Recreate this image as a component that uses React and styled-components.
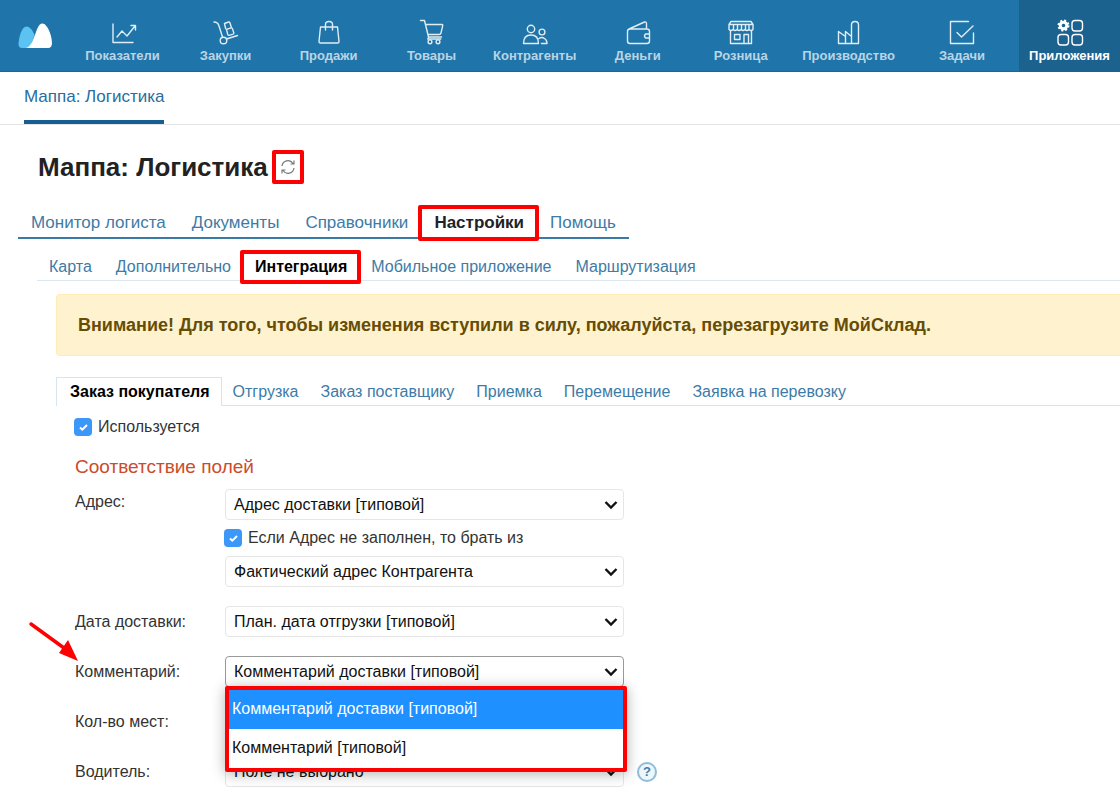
import React from "react";
import styled, { createGlobalStyle, css } from "styled-components";

const GlobalStyle = createGlobalStyle`
  *, *::before, *::after { box-sizing: border-box; }
  body {
    margin: 0;
    background: #fff;
    color: #333;
    font-family: "Liberation Sans", Arial, sans-serif;
    font-size: 16px;
    line-height: 20px;
  }
  a { text-decoration: none; color: inherit; }
`;

const Page = styled.div`
  overflow-x: hidden;
`;

const TopBar = styled.header`
  display: flex;
  height: 72px;
  background: #1f74aa;
  box-shadow: inset 0 -1px 0 #1b6796;
`;

const Logo = styled.a`
  flex: none;
  width: 71px;
  padding: 23px 0 0 18px;
`;

const Nav = styled.nav`
  display: flex;
  flex: 1;
`;

const NavItem = styled.a`
  display: flex;
  flex: ${(p) => (p.$grow ? 1 : 0)} 0 auto;
  flex-direction: column;
  align-items: center;
  gap: 1px;
  min-width: ${(p) => (p.$active ? 101 : 103)}px;
  padding: 18px ${(p) => (p.$active ? 8 : 10)}px 0;
  font-size: 13px;
  font-weight: bold;
  line-height: 18px;
  color: ${(p) => (p.$active ? "#fff" : "#b9d4e5")};
  background: ${(p) => (p.$active ? "#1b628f" : "transparent")};

  svg {
    width: 28px;
    height: 28px;
    fill: none;
    stroke: ${(p) => (p.$active ? "#fff" : "#e1edf4")};
    stroke-width: 1.4;
    stroke-linejoin: round;
    stroke-linecap: round;
  }
`;

const AppTabs = styled.nav`
  display: flex;
  height: 53px;
  padding: 0 24px;
  border-bottom: 1px solid #e4e4e4;
`;

const AppTab = styled.a`
  height: 52px;
  padding-top: 15px;
  border-bottom: 4px solid #155f91;
  font-size: 17px;
  color: #2a6d9c;
`;

const Title = styled.div`
  display: flex;
  align-items: center;
  gap: 4px;
  padding: 23px 0 0 38px;
`;

const Heading = styled.h1`
  margin: 0;
  font-size: 26px;
  line-height: 38px;
  color: #222;
`;

const Refresh = styled.button`
  display: grid;
  place-items: center;
  width: 32px;
  height: 34px;
  padding: 0;
  border: 4px solid #fd0002;
  border-radius: 2px;
  background: #fff;
  color: #777;
`;

const marked = css`
  position: relative;
  &::after {
    content: "";
    position: absolute;
    inset: ${(p) => p.$inset};
    border: 4px solid #fd0002;
    border-radius: 2px;
  }
`;

const MainTabs = styled.nav`
  display: flex;
  width: max-content;
  margin: 19px 0 0 18px;
`;

const MainTab = styled.a`
  height: 34px;
  padding: 8px 13px 0;
  border-bottom: 2px solid #3a7ba6;
  font-size: 17px;
  color: ${(p) => (p.$active ? "#222" : "#3d7ba6")};
  font-weight: ${(p) => (p.$active ? "bold" : "normal")};
  ${(p) => p.$active && marked}
`;

const SubTabs = styled.nav`
  display: flex;
  margin: 11px 0 0 37px;
  border-bottom: 1px solid #dbe8f0;
`;

const SubTab = styled.a`
  height: 30px;
  padding: 7px 12px 0;
  color: ${(p) => (p.$active ? "#000" : "#3d7ba6")};
  font-weight: ${(p) => (p.$active ? "bold" : "normal")};
  ${(p) => p.$active && marked}
`;

const Notice = styled.p`
  margin: 13px 0 0 56px;
  padding: 20px 21px;
  border: 1px solid #ffecb5;
  border-right: 0;
  border-radius: 4px 0 0 4px;
  background: #fff2cf;
  color: #664d03;
  font-size: 18px;
  font-weight: bold;
`;

const DocTabs = styled.nav`
  display: flex;
  margin: 21px 0 0 56px;
  border-bottom: 1px solid #d9e5ee;
`;

const DocTab = styled.a`
  height: 28px;
  padding: 5px 11px 0;
  color: #3d7ba6;
  ${(p) =>
    p.$active &&
    css`
      height: 29px;
      margin-bottom: -1px;
      padding: 4px 11px 0 13px;
      border: 1px solid #d9e5ee;
      border-bottom: 0;
      background: #fff;
      color: #000;
      font-weight: bold;
    `}
`;

const Form = styled.form`
  padding: 12px 0 8px 75px;
`;

const CheckLabel = styled.label`
  display: flex;
  align-items: center;
  gap: 6px;
  height: 18px;
  margin-left: -1px;
`;

const Check = styled.input`
  appearance: none;
  flex: none;
  width: 18px;
  height: 18px;
  margin: 0;
  border-radius: 4px;
  background: #3b97f8
    url("data:image/svg+xml,%3Csvg xmlns='http://www.w3.org/2000/svg' viewBox='0 0 18 18'%3E%3Cpath d='M6 9.5l2.3 2.2L13 7' fill='none' stroke='white' stroke-width='2'/%3E%3C/svg%3E")
    center / 18px no-repeat;
`;

const Section = styled.h2`
  margin: 19px 0 0;
  font-size: 19px;
  font-weight: normal;
  line-height: 24px;
  color: #cb4b2b;
`;

const Fields = styled.div`
  display: grid;
  gap: 19px;
  margin-top: 10px;
`;

const Field = styled.div`
  display: grid;
  grid-template-columns: 150px minmax(0, 399px) auto;
  justify-content: start;
  align-items: start;
`;

const FieldName = styled.label`
  position: relative;
  padding-top: ${(p) => (p.$raised ? 3 : 6)}px;
`;

const Controls = styled.div`
  position: relative;
  display: grid;
  gap: 9px;
`;

const SelectBox = styled.div`
  position: relative;
  svg {
    position: absolute;
    right: 6px;
    top: 11px;
    pointer-events: none;
  }
`;

const Select = styled.select`
  appearance: none;
  display: block;
  width: 100%;
  height: 31px;
  padding: 0 24px 0 8px;
  border: 1px solid ${(p) => (p.$open ? "#999" : "#e6e6e6")};
  border-radius: 4px;
  background: #fff;
  color: #111;
  font: inherit;
`;

const Menu = styled.ul`
  position: absolute;
  z-index: 2;
  top: 30px;
  left: 0;
  right: -3px;
  margin: 0;
  padding: 0;
  list-style: none;
  border: 4px solid #fd0002;
  border-radius: 2px;
  background: #fff;
  box-shadow: 0 2px 14px rgba(0, 0, 0, 0.3);
`;

const Option = styled.li`
  height: 39px;
  padding: 9px 3px;
  color: ${(p) => (p.$selected ? "#fff" : "#111")};
  background: ${(p) => (p.$selected ? "#1e90ff" : "#fff")};
`;

const Help = styled.button`
  width: 20px;
  height: 20px;
  margin: 6px 0 0 13px;
  padding: 0;
  border: 2px solid #8fbdd8;
  border-radius: 50%;
  background: #edf6fb;
  color: #3d7fae;
  font: bold 13px/16px "Liberation Sans", Arial, sans-serif;
`;

const Pointer = styled.svg`
  position: absolute;
  left: -47px;
  top: -36px;
`;

const icons = {
  stats: <path d="M4 6v18.500h20M8 19l5-6 5 5 8-10M22 7.500h4.500V12M8 19v.1M13 13v.1M18 18v.1" />,
  buy: (
    <>
      <path d="M2 4q4 0 5 4l3.500 11M14.500 21l11-3.500" />
      <circle cx="11.500" cy="22.500" r="3.300" />
      <path d="M12.500 5.500L16.500 4q1-.200 1.400.800l1.300 4q.200 1-.700 1.300l-3.500 1.100q-1 .200-1.400-.700zM14.500 11.300l4.500-1.400q1-.200 1.400.700l1.400 4.200q.200 1-.700 1.300l-4 1.200q-1 .200-1.300-.700z" />
    </>
  ),
  sell: <path d="M5.500 9h17l1.500 14.500q0 1.500-1.500 1.500h-17Q4 25 4 23.500zM10.500 12V6.500q0-3 3.500-3t3.500 3V12" />,
  goods: (
    <>
      <path d="M2.500 2.500h4l4 16.500h13M7.500 6.500h16.500q1 0 .700 1.200L23 15q-.300 1.500-2 1.500H10M10.800 19l-1 2h13" />
      <circle cx="12" cy="23.800" r="1.900" />
      <circle cx="20" cy="23.800" r="1.900" />
    </>
  ),
  people: (
    <>
      <circle cx="10" cy="11" r="3.700" />
      <circle cx="21" cy="14" r="2.900" />
      <path d="M2.500 25.500q0-8.500 7.500-8.500t7.500 8.500zM18 20.500q3-2 5.500 0 2.500 1.500 2.500 5h-5.500" />
    </>
  ),
  money: (
    <path d="M5 11L20.500 4q2-.500 2 2v5M6 11h17q2.500 0 2.500 2.500V23q0 2.500-2.500 2.500H6Q3.500 25.500 3.500 23v-9.500Q3.500 11 6 11zM25.500 16h-4q-2 2 0 4h4" />
  ),
  retail: (
    <>
      <path d="M4 3.500h20l2 3v5q-2 2-4 0-2 2-4 0-2 2-4 0-2 2-4 0-2 2-4 0-2 2-4 0v-5zM2.500 6.500h23M6.500 6.500v5M10.500 6.500v5M14.500 6.500v5M18.500 6.500v5M22 6.500v5" />
      <path d="M3.500 13v12.500h21V13M7.500 16.500h5.500v5H7.500zM17 25.500v-9h4.500v9" />
    </>
  ),
  factory: (
    <path d="M3.500 25.500v-12l7 5v-5l6 5V7q0-3.500 3.500-3.500t3.500 3.500v18.500zM10.500 18v7M16.500 18v7" />
  ),
  tasks: <path d="M20.500 3.500h-18v22h23V15M9 14.500l4.500 4.500L25 8" />,
  apps: (
    <>
      <rect x="16" y="2.500" width="10.500" height="10.500" rx="3" />
      <rect x="2" y="16.500" width="10.500" height="10.500" rx="3" />
      <rect x="16" y="16.500" width="10.500" height="10.500" rx="3" />
      <circle cx="7.500" cy="7.500" r="3.300" strokeWidth="3" />
      <circle cx="7.500" cy="7.500" r="5" strokeWidth="2" strokeDasharray="2 1.930" strokeLinecap="butt" />
    </>
  ),
};

const sections = [
  ["stats", "Показатели"],
  ["buy", "Закупки"],
  ["sell", "Продажи"],
  ["goods", "Товары"],
  ["people", "Контрагенты"],
  ["money", "Деньги"],
  ["retail", "Розница"],
  ["factory", "Производство"],
  ["tasks", "Задачи"],
  ["apps", "Приложения"],
];

const mainTabs = ["Монитор логиста", "Документы", "Справочники", "Настройки", "Помощь"];
const subTabs = ["Карта", "Дополнительно", "Интеграция", "Мобильное приложение", "Маршрутизация"];
const docTabs = ["Заказ покупателя", "Отгрузка", "Заказ поставщику", "Приемка", "Перемещение", "Заявка на перевозку"];

function Dropdown({ id, value, open, label }) {
  return (
    <SelectBox>
      <Select id={id} $open={open} aria-label={label} defaultValue={value}>
        <option>{value}</option>
      </Select>
      <svg width="14" height="10" viewBox="0 0 14 10" fill="none" stroke="#111" strokeWidth="2.400">
        <path d="M1.500 2L7 7.500 12.500 2" />
      </svg>
    </SelectBox>
  );
}

export default function App() {
  return (
    <Page>
      <GlobalStyle />
      <TopBar>
        <Logo href="#" aria-label="МойСклад">
          <svg width="35" height="26" viewBox="0 0 35 26">
            <path d="M4 25Q.500 25 .500 21C1 13 4 3.500 8.500 3.500C12 3.500 15 8 16.500 12L12 25z" fill="#5bc3f2" />
            <path d="M8 25C13 24 15 17 18 9C20 3 22 .500 24.500 .500C29 .500 34 12 34 20Q34 25 30 25z" fill="#fff" />
          </svg>
        </Logo>
        <Nav>
          {sections.map(([icon, name]) => (
            <NavItem key={icon} href="#" $active={icon === "apps"} $grow={icon === "tasks"}>
              <svg viewBox="0 0 28 28" aria-hidden="true">{icons[icon]}</svg>
              {name}
            </NavItem>
          ))}
        </Nav>
      </TopBar>
      <AppTabs>
        <AppTab href="#">Маппа: Логистика</AppTab>
      </AppTabs>
      <main>
        <Title>
          <Heading>Маппа: Логистика</Heading>
          <Refresh type="button" aria-label="Обновить">
            <svg width="16" height="16" viewBox="0 0 16 16" fill="none" stroke="currentColor" strokeWidth="1.200">
              <path d="M2 7a6 6 0 0 1 11-2.500M14 1.500V5h-3.500M14 9a6 6 0 0 1-11 2.500M2 14.500V11h3.500" />
            </svg>
          </Refresh>
        </Title>
        <MainTabs>
          {mainTabs.map((t) => (
            <MainTab key={t} href="#" $active={t === "Настройки"} $inset="0 -2px -4px -3px">{t}</MainTab>
          ))}
        </MainTabs>
        <SubTabs>
          {subTabs.map((t) => (
            <SubTab key={t} href="#" $active={t === "Интеграция"} $inset="0 -2px -4px -3px">{t}</SubTab>
          ))}
        </SubTabs>
        <Notice>Внимание! Для того, чтобы изменения вступили в силу, пожалуйста, перезагрузите МойСклад.</Notice>
        <DocTabs>
          {docTabs.map((t, i) => (
            <DocTab key={t} href="#" $active={i === 0}>{t}</DocTab>
          ))}
        </DocTabs>
        <Form>
          <CheckLabel>
            <Check type="checkbox" defaultChecked />
            Используется
          </CheckLabel>
          <Section>Соответствие полей</Section>
          <Fields>
            <Field>
              <FieldName htmlFor="address" $raised>Адрес:</FieldName>
              <Controls>
                <Dropdown id="address" value="Адрес доставки [типовой]" />
                <CheckLabel>
                  <Check type="checkbox" defaultChecked />
                  Если Адрес не заполнен, то брать из
                </CheckLabel>
                <Dropdown id="address2" label="Запасной адрес" value="Фактический адрес Контрагента" />
              </Controls>
            </Field>
            <Field>
              <FieldName htmlFor="date">Дата доставки:</FieldName>
              <Dropdown id="date" value="План. дата отгрузки [типовой]" />
            </Field>
            <Field>
              <FieldName htmlFor="comment">
                Комментарий:
                <Pointer width="52" height="44" viewBox="0 0 52 44" aria-hidden="true">
                  <path d="M3 4L36 28" stroke="#fd0002" strokeWidth="3.500" strokeLinecap="round" />
                  <path d="M50 41L31 33l9-13z" fill="#fd0002" />
                </Pointer>
              </FieldName>
              <Controls>
                <Dropdown id="comment" open value="Комментарий доставки [типовой]" />
                <Menu role="listbox" aria-label="Комментарий">
                  <Option role="option" aria-selected="true" $selected>Комментарий доставки [типовой]</Option>
                  <Option role="option" aria-selected="false">Комментарий [типовой]</Option>
                </Menu>
              </Controls>
            </Field>
            <Field>
              <FieldName htmlFor="places">Кол-во мест:</FieldName>
              <Dropdown id="places" value="Поле не выбрано" />
            </Field>
            <Field>
              <FieldName htmlFor="driver">Водитель:</FieldName>
              <Dropdown id="driver" value="Поле не выбрано" />
              <Help type="button">?</Help>
            </Field>
          </Fields>
        </Form>
      </main>
    </Page>
  );
}
